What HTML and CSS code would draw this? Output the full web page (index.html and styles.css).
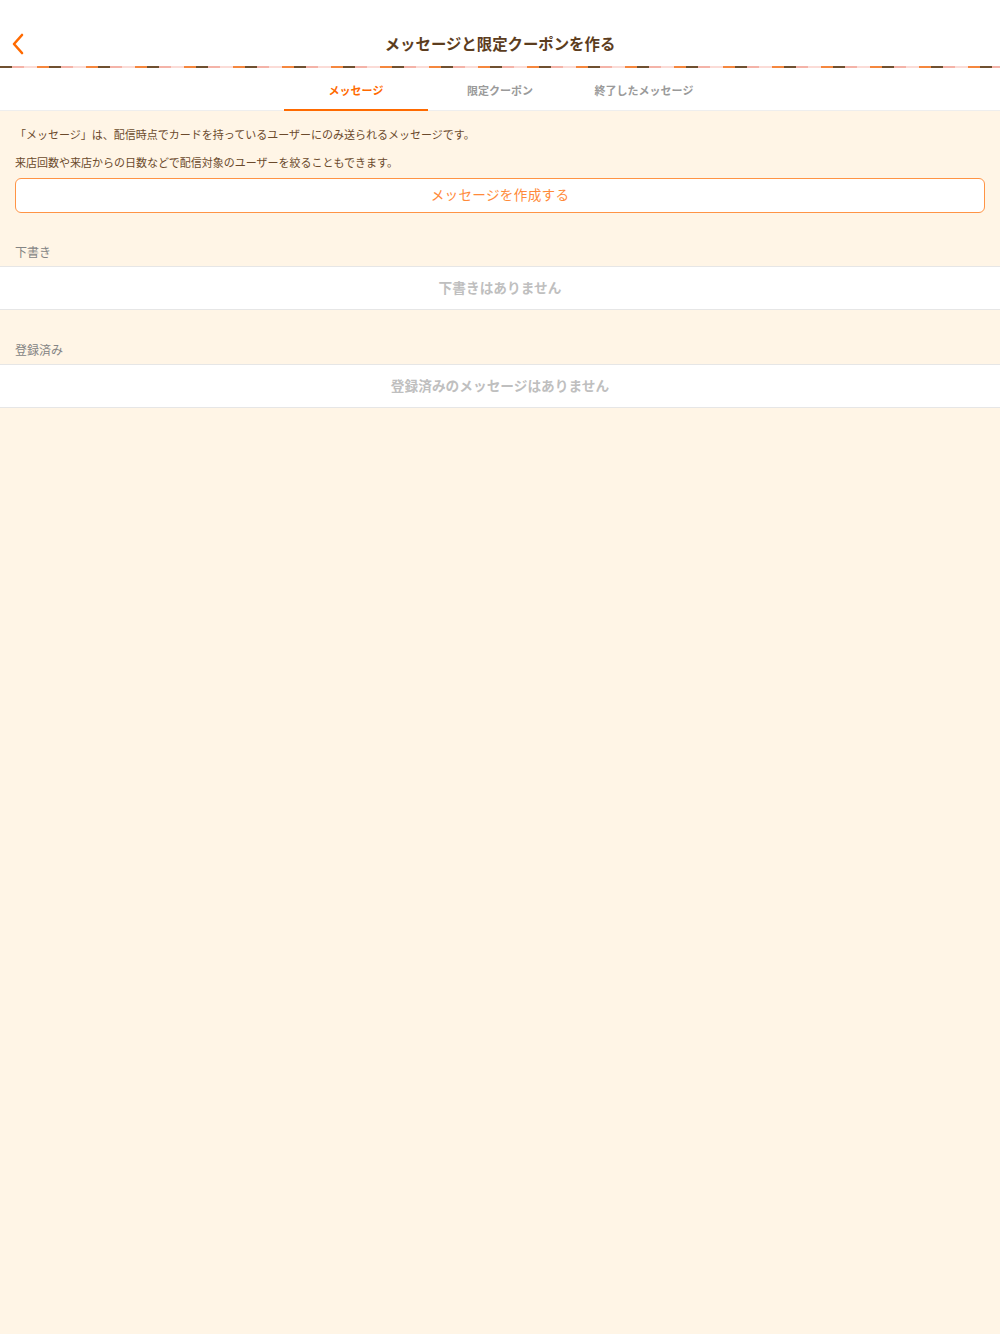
FILE: index.html
```html
<!DOCTYPE html>
<html lang="ja">
<head>
<meta charset="utf-8">
<title>メッセージと限定クーポンを作る</title>
<link rel="stylesheet" href="styles.css">
</head>
<body>
<header class="header">
  <div class="navbar">
    <div class="nav-left">
      <svg class="back" width="14" height="22" viewBox="0 0 14 22"><polyline points="11,2 3,11 11,20" fill="none" stroke="#ff6a00" stroke-width="2.6" stroke-linecap="round" stroke-linejoin="round"/></svg>
    </div>
    <h1 class="title">メッセージと限定クーポンを作る</h1>
    <div class="nav-right"></div>
  </div>
  <div class="stripe"></div>
</header>
<nav class="tabs">
  <div class="tab active">メッセージ</div>
  <div class="tab">限定クーポン</div>
  <div class="tab">終了したメッセージ</div>
</nav>
<main class="content">
  <div class="intro">
    <p class="info">「メッセージ」は、配信時点でカードを持っているユーザーにのみ送られるメッセージです。</p>
    <p class="info second">来店回数や来店からの日数などで配信対象のユーザーを絞ることもできます。</p>
    <button class="create">メッセージを作成する</button>
  </div>
  <section class="section">
    <h2 class="label">下書き</h2>
    <div class="row">下書きはありません</div>
  </section>
  <section class="section">
    <h2 class="label">登録済み</h2>
    <div class="row">登録済みのメッセージはありません</div>
  </section>
</main>
</body>
</html>
```
FILE: styles.css
```css
* { box-sizing: border-box; }
html, body { margin: 0; padding: 0; }
body {
  width: 1000px;
  min-height: 1334px;
  background: #fff5e6;
  font-family: "Noto Sans CJK JP", "Noto Sans", sans-serif;
}
.header {
  background: #ffffff;
  padding-top: 22px;
}
.navbar {
  display: grid;
  grid-template-columns: 1fr auto 1fr;
  align-items: center;
  height: 44px;
}
.nav-left {
  display: flex;
  align-items: center;
  padding-left: 11px;
}
.back { display: block; }
.title {
  margin: 0 0 2px;
  font-size: 15.4px;
  font-weight: 700;
  color: #5c3d1e;
  line-height: 20px;
}
.stripe {
  height: 2px;
  background: repeating-linear-gradient(to right,
    #6f5030 0, #6f5030 12.25px,
    #f4b3a8 12.25px, #f4b3a8 24.5px,
    #fbdcd7 24.5px, #fbdcd7 36.75px,
    #f5873e 36.75px, #f5873e 49px);
}
.tabs {
  display: flex;
  justify-content: center;
  background: #ffffff;
  height: 43px;
  border-bottom: 1px solid #eeeeee;
}
.tab {
  width: 144px;
  display: flex;
  align-items: center;
  justify-content: center;
  font-size: 11px;
  font-weight: 700;
  color: #9a9a9a;
  border-bottom: 2px solid transparent;
  margin-bottom: -1px;
  padding-top: 2px;
}
.tab.active {
  color: #ff6a00;
  border-bottom-color: #ff6a00;
}
.intro {
  padding: 15px 15px 0;
}
.info {
  margin: 0;
  font-size: 11px;
  line-height: 16px;
  color: #6b4a2c;
}
.info.second { margin-top: 12px; }
.create {
  display: block;
  width: 100%;
  height: 35px;
  margin-top: 8px;
  background: #ffffff;
  border: 1.6px solid #ff9445;
  border-radius: 6px;
  font-family: inherit;
  font-size: 13.6px;
  color: #ff8a3a;
  letter-spacing: 0.3px;
  padding: 0 0 3px;
}
.section { margin-top: 31px; }
.section + .section { margin-top: 32px; }
.label {
  margin: 0;
  padding: 0 15px 6px;
  font-size: 12px;
  line-height: 16px;
  font-weight: 400;
  color: #848484;
}
.row {
  height: 44px;
  background: #ffffff;
  border-top: 1px solid #e6e6e6;
  border-bottom: 1px solid #e6e6e6;
  display: flex;
  align-items: center;
  justify-content: center;
  padding-bottom: 2px;
  font-size: 13.7px;
  font-weight: 700;
  color: #bfbfbf;
}
```
